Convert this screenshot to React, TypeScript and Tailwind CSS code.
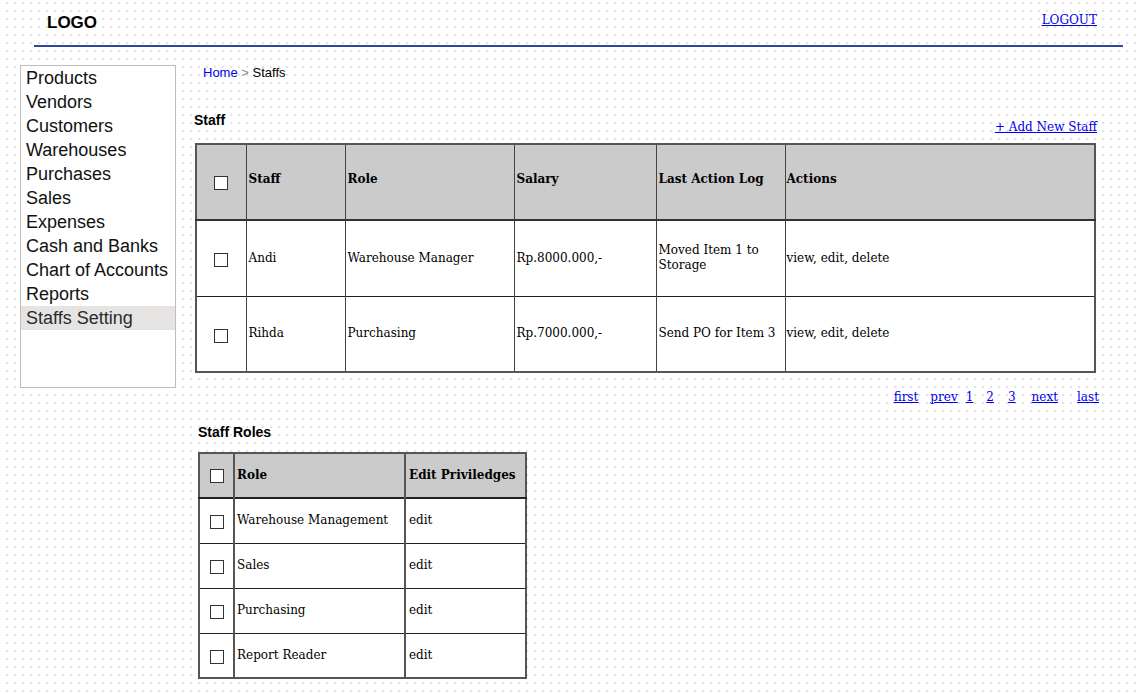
import React from 'react'

const menu = [
  'Products',
  'Vendors',
  'Customers',
  'Warehouses',
  'Purchases',
  'Sales',
  'Expenses',
  'Cash and Banks',
  'Chart of Accounts',
  'Reports',
  'Staffs Setting',
]

const staff = [
  { name: 'Andi', role: 'Warehouse Manager', salary: 'Rp.8000.000,-', log: 'Moved Item 1 to Storage' },
  { name: 'Rihda', role: 'Purchasing', salary: 'Rp.7000.000,-', log: 'Send PO for Item 3' },
]

const roles = ['Warehouse Management', 'Sales', 'Purchasing', 'Report Reader']

const serif = "font-['DejaVu_Serif',serif]"
const sans = "font-['Liberation_Sans',Arial,sans-serif]"

function Box() {
  return <span className="inline-block h-[14px] w-[14px] border border-[#333] bg-white align-middle" />
}

export default function App() {
  return (
    <div className="min-h-[694px] w-[1140px] bg-white bg-[radial-gradient(circle,#e2e2e2_0.7px,transparent_1.1px)] bg-[length:8px_8px] bg-[position:3px_-1px] text-black">
      {/* ── Header ───────────────────────────── */}
      <header className="ml-[34px] mr-[17px] flex h-[47px] items-start justify-between border-b-2 border-[#31479a]">
        <div className={`${sans} ml-[13px] mt-[12px] text-[17px] font-bold leading-[22px]`}>LOGO</div>
        <a href="#" className={`${serif} mr-[26px] mt-[13px] text-[12px] leading-[15px] text-[#0000ee] underline`}>
          LOGOUT
        </a>
      </header>

      <div className="flex items-start">
        {/* Sidebar */}
        <nav className={`${sans} ml-[20px] mt-[18px] h-[323px] w-[156px] border border-[#bdbdbd] bg-white text-[18px] leading-[24px]`}>
          {menu.map((m) => (
            <div
              key={m}
              className={`px-[5px] ${m === 'Staffs Setting' ? 'bg-[#e5e4e2] text-[#2b2b2b]' : 'text-[#111]'}`}
            >
              {m}
            </div>
          ))}
        </nav>

        {/* Main */}
        <main className="ml-[19px] w-[902px]">
          <div className={`${sans} ml-[8px] mt-[18px] text-[13px] leading-[16px]`}>
            <a href="#" className="text-[#0000ee]">Home</a>
            <span className="text-[#888]"> &gt; </span>
            <span>Staffs</span>
          </div>

          <div className="mt-[31px] flex items-end justify-between">
            <div className={`${sans} mb-[14px] -ml-[1px] text-[14px] font-bold leading-[17px]`}>Staff</div>
            <a href="#" className={`${serif} mb-[8px] text-[12px] leading-[15px] text-[#0000ee] underline`}>
              + Add New Staff
            </a>
          </div>

          <table className={`${serif} w-[901px] border-collapse border-2 border-[#555] text-[12px] leading-[15px]`}>
            <thead>
              <tr className="h-[76px] border-b-2 border-[#333] bg-[#cbcbcb] text-left">
                <th className="w-[50px] border-r border-[#444] pt-[1px] text-center"><Box /></th>
                <th className="w-[99px] border-r border-[#444] pb-[6px] pl-[2px] font-bold">Staff</th>
                <th className="w-[169px] border-r border-[#444] pb-[6px] pl-[2px] font-bold">Role</th>
                <th className="w-[142px] border-r border-[#444] pb-[6px] pl-[2px] font-bold">Salary</th>
                <th className="w-[129px] border-r border-[#444] pb-[6px] pl-[2px] font-bold">Last Action Log</th>
                <th className="pb-[6px] pl-[1px] font-bold">Actions</th>
              </tr>
            </thead>
            <tbody>
              {staff.map((s) => (
                <tr key={s.name} className="h-[76px] border-b border-[#222] bg-white">
                  <td className="border-r border-[#444] pt-[4px] text-center"><Box /></td>
                  <td className="border-r border-[#444] pl-[2px]">{s.name}</td>
                  <td className="border-r border-[#444] pl-[2px]">{s.role}</td>
                  <td className="border-r border-[#444] pl-[2px]">{s.salary}</td>
                  <td className="border-r border-[#444] pl-[2px]">{s.log}</td>
                  <td className="pl-[1px]">view, edit, delete</td>
                </tr>
              ))}
            </tbody>
          </table>

          <div className={`${serif} mr-[-2px] mt-[17px] flex justify-end text-[12px] leading-[15px] text-[#0000ee]`}>
            <a href="#" className="underline">first</a>
            <a href="#" className="ml-[12px] underline">prev</a>
            <a href="#" className="ml-[8px] underline">1</a>
            <a href="#" className="ml-[13px] underline">2</a>
            <a href="#" className="ml-[14px] underline">3</a>
            <a href="#" className="ml-[16px] underline">next</a>
            <a href="#" className="ml-[19px] underline">last</a>
          </div>

          <div className={`${sans} ml-[3px] mt-[19px] text-[14px] font-bold leading-[17px]`}>Staff Roles</div>

          <table className={`${serif} ml-[3px] mt-[11px] w-[329px] border-collapse border-2 border-[#555] text-[12px] leading-[15px]`}>
            <thead>
              <tr className="h-[45px] border-b-2 border-[#222] bg-[#cbcbcb] text-left">
                <th className="w-[35px] border-r-2 border-[#555] text-center"><Box /></th>
                <th className="w-[171px] border-r-2 border-[#555] pl-[2px] font-bold">Role</th>
                <th className="pl-[3px] font-bold">Edit Priviledges</th>
              </tr>
            </thead>
            <tbody>
              {roles.map((r) => (
                <tr key={r} className="h-[45px] border-b border-[#222] bg-white">
                  <td className="border-r-2 border-[#555] pt-[3px] text-center"><Box /></td>
                  <td className="border-r-2 border-[#555] pl-[2px]">{r}</td>
                  <td className="pl-[3px]">edit</td>
                </tr>
              ))}
            </tbody>
          </table>
        </main>
      </div>
    </div>
  )
}
